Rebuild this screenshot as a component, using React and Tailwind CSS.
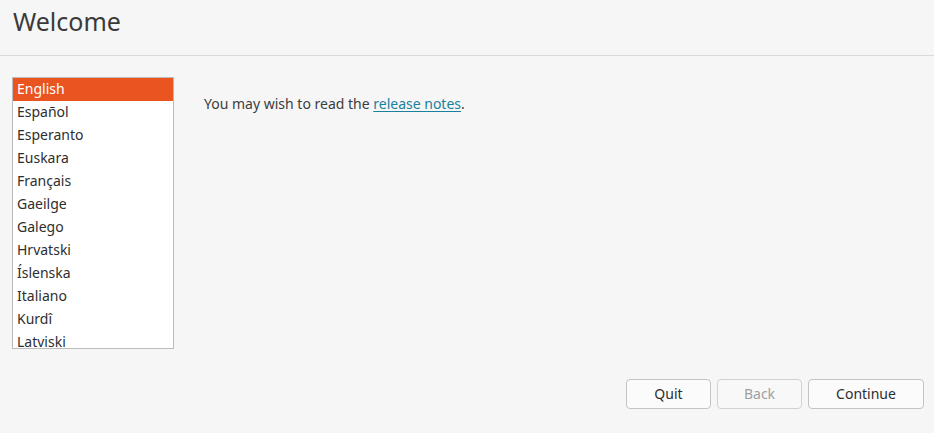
const languages = [
  'English',
  'Español',
  'Esperanto',
  'Euskara',
  'Français',
  'Gaeilge',
  'Galego',
  'Hrvatski',
  'Íslenska',
  'Italiano',
  'Kurdî',
  'Latviski',
];

const App = () => {
  return (
    <div className="w-[934px] h-[433px] bg-[#f6f6f6] flex flex-col text-[#3c3c3c] overflow-hidden" style={{ fontFamily: '"Noto Sans", "Open Sans", sans-serif' }}>
      <header className="h-[56px] border-b border-[#d9d9d9] flex items-center px-[13px]">
        <h1 className="text-[25px] leading-none text-[#3a3a3a] -mt-[12px]">Welcome</h1>
      </header>
      <main className="flex-1 flex pt-[21px] pl-[12px]">
        <div className="w-[162px] h-[272px] border border-[#bcbcbc] bg-white overflow-hidden">
          {languages.map((lang, i) => (
            <div
              key={lang}
              className={`h-[23px] flex items-center pl-[4px] pb-[2px] text-[14px] ${i === 0 ? 'bg-[#e95420] text-white' : 'text-[#2e2e2e]'}`}
            >
              {lang}
            </div>
          ))}
        </div>
        <p className="ml-[30px] mt-[16px] text-[14px] text-[#3c3c3c]">
          You may wish to read the{' '}
          <a href="#" className="text-[#19809e] underline underline-offset-2">release notes</a>.
        </p>
      </main>
      <footer className="flex justify-end gap-[6px] pr-[10px] pb-[24px]">
        <button className="w-[85px] h-[30px] pb-[2px] rounded-[4px] border border-[#c4c4c4] bg-[#fbfbfb] text-[14px] text-[#2e2e2e]">Quit</button>
        <button className="w-[85px] h-[30px] pb-[2px] rounded-[4px] border border-[#d2d2d2] bg-[#f8f8f8] text-[14px] text-[#a0a0a0]" disabled>Back</button>
        <button className="w-[116px] h-[30px] pb-[2px] rounded-[4px] border border-[#c4c4c4] bg-[#fbfbfb] text-[14px] text-[#2e2e2e]">Continue</button>
      </footer>
    </div>
  );
};

export default App;
